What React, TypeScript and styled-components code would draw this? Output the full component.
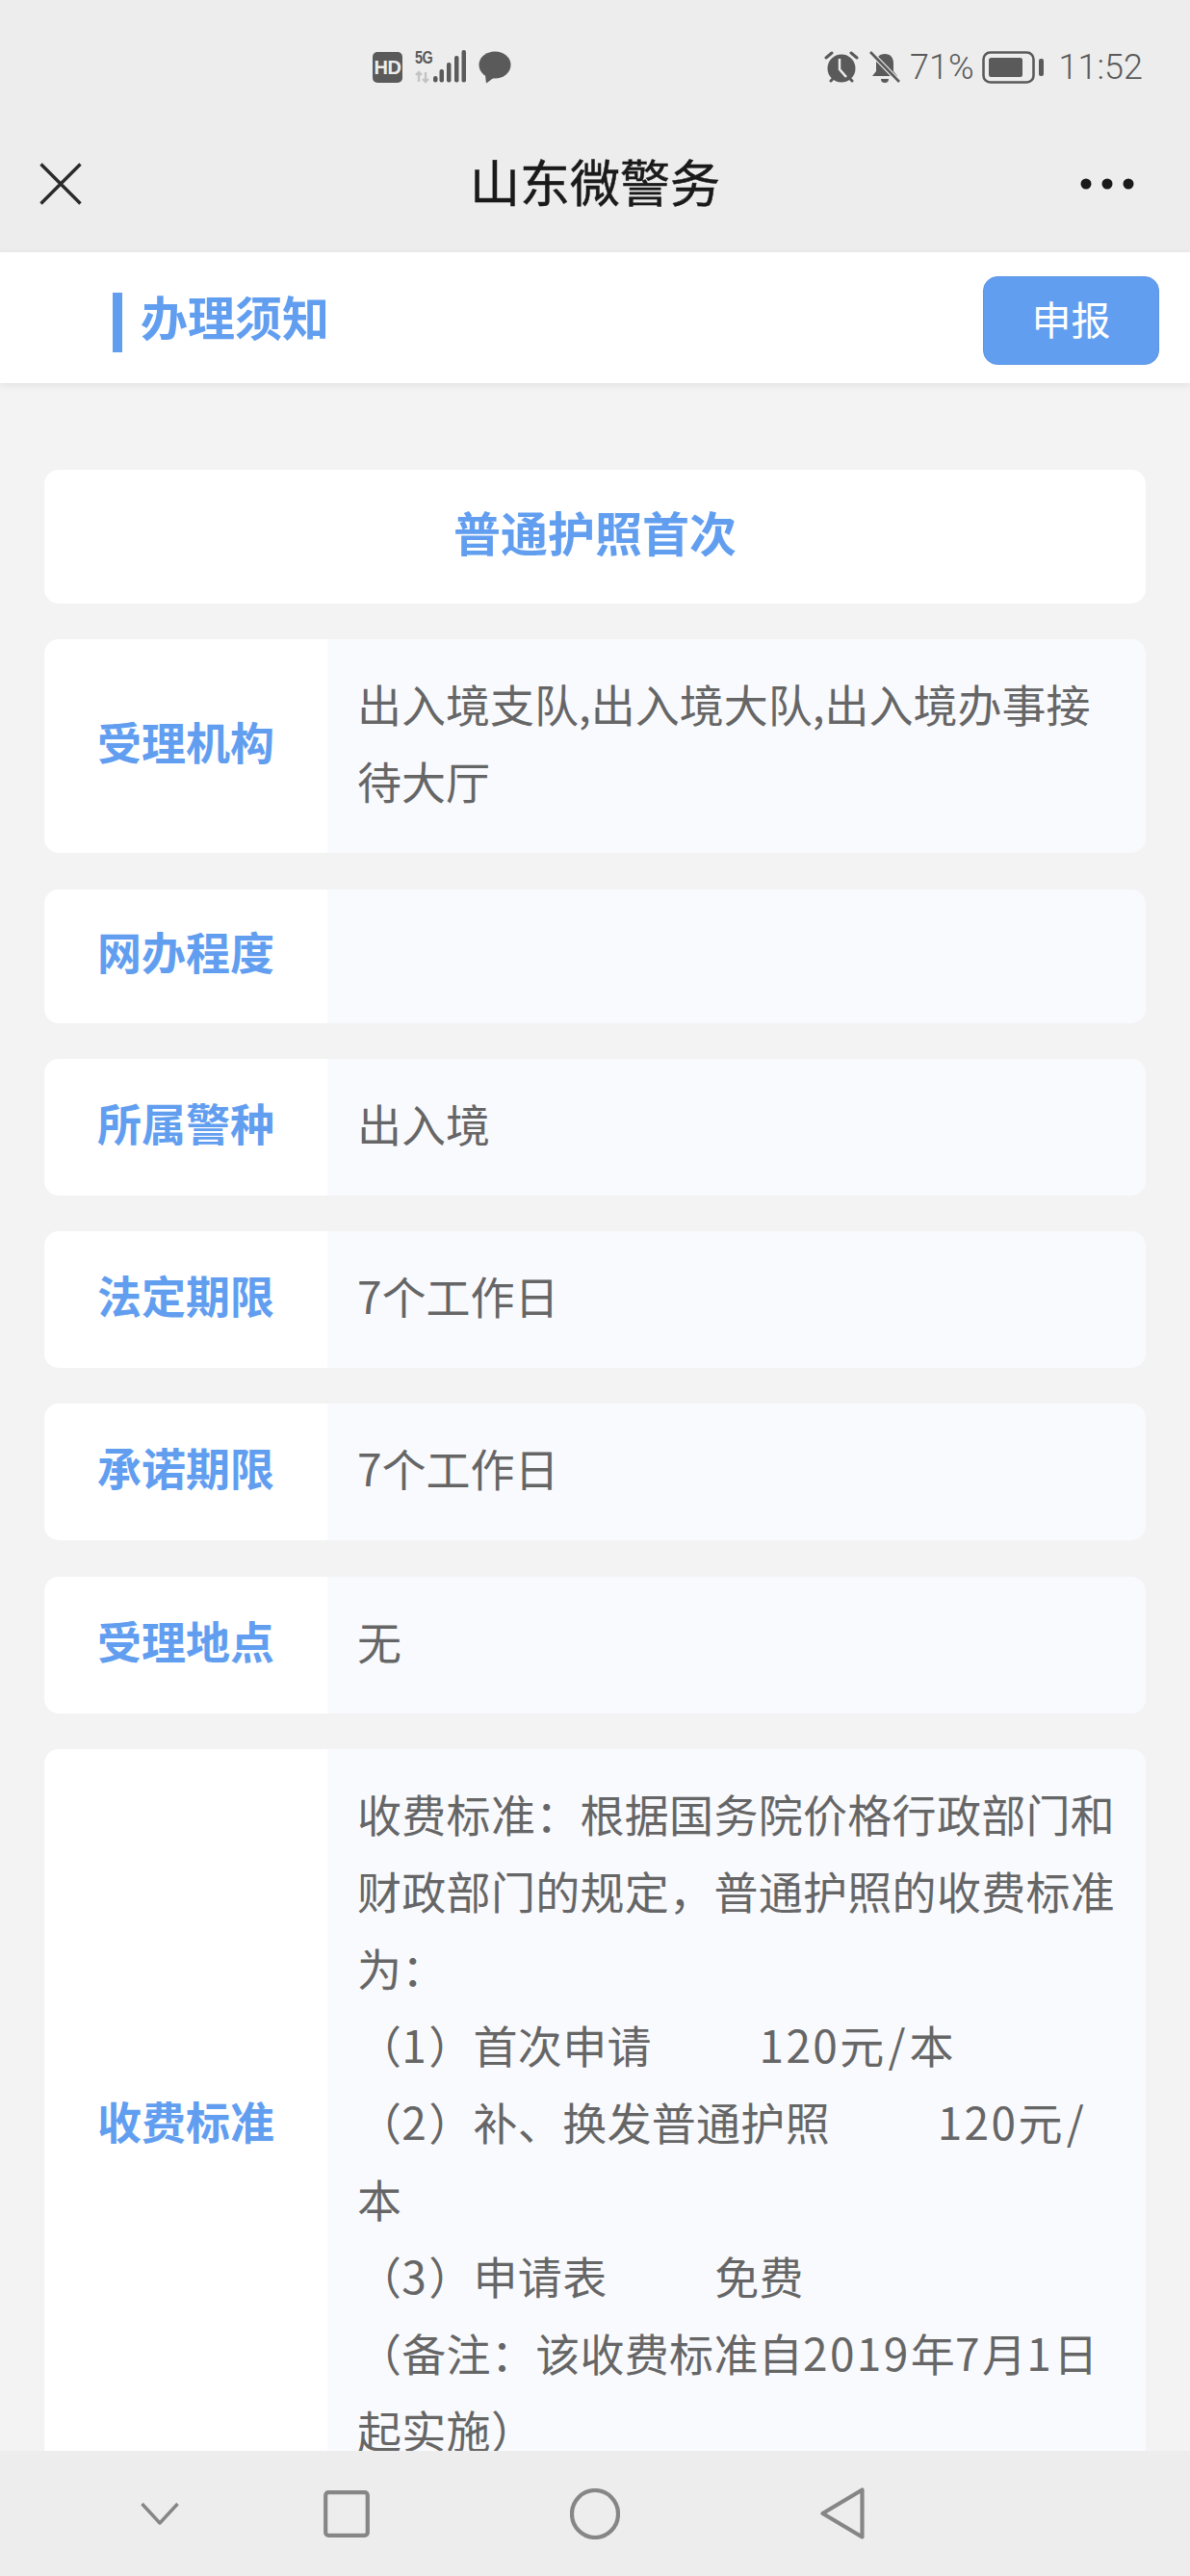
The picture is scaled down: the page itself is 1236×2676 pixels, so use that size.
import React from "react";
import styled, { createGlobalStyle } from "styled-components";

const Global = createGlobalStyle`
  html, body { margin: 0; padding: 0; background: #f3f3f3; }
  * { box-sizing: border-box; }
`;

const CJK = `"Noto Sans CJK SC", "Noto Sans", sans-serif`;
const BLUE = "#629ef0";

const Page = styled.div`
  width: 1236px;
  height: 2676px;
  display: flex;
  flex-direction: column;
  overflow: hidden;
  background: #f3f3f3;
  font-family: ${CJK};
`;
const StatusBar = styled.div`
  height: 120px;
  flex: none;
  background: #ededed;
  display: flex;
  align-items: flex-start;
  justify-content: space-between;
  padding: 53px 49px 0 387px;
  color: #5a5a5a;
`;
const StatusGroup = styled.div`
  display: flex;
  align-items: center;
  height: 34px;
`;
const HdBadge = styled.span`
  width: 31px;
  height: 32px;
  border-radius: 5px;
  background: #5a5a5a;
  color: #ededed;
  font: 700 20px "Liberation Sans", sans-serif;
  letter-spacing: -0.5px;
  display: flex;
  align-items: center;
  justify-content: center;
  margin-right: 13px;
`;
const SignalWrap = styled.span`
  position: relative;
  display: block;
  width: 53px;
  height: 34px;
  margin-right: 13px;
`;
const FiveG = styled.span`
  position: absolute;
  left: 0;
  top: -1px;
  font: 700 18px/16px "Liberation Sans", sans-serif;
  letter-spacing: -0.5px;
  transform: scaleX(0.8);
  transform-origin: left;
  color: #5a5a5a;
`;
const StatusText = styled.span<{ $left: number }>`
  font: 300 36px/34px Roboto, sans-serif;
  color: #5a5a5a;
  margin-left: ${(p) => p.$left}px;
`;
const IconSlot = styled.svg<{ $left?: number }>`
  display: block;
  flex: none;
  margin-left: ${(p) => p.$left ?? 0}px;
`;
const TitleBar = styled.div`
  height: 142px;
  flex: none;
  background: #ededed;
  display: grid;
  grid-template-columns: 1fr auto 1fr;
  align-items: center;
  padding: 0 58px 0 41px;
`;
const BarTitle = styled.div`
  font-size: 52px;
  line-height: 60px;
  font-weight: 400;
  color: #1a1a1a;
  padding-bottom: 6px;
  margin-left: 17px;
  -webkit-text-stroke: 0.5px #1a1a1a;
`;
const BarRight = styled.div`
  display: flex;
  justify-content: flex-end;
`;
const SubHeader = styled.div`
  height: 136px;
  flex: none;
  background: #fff;
  display: flex;
  align-items: center;
  padding: 6px 32px 0 117px;
  box-shadow: 0 2px 8px rgba(0, 0, 0, 0.08);
  position: relative;
  z-index: 1;
`;
const Accent = styled.span`
  width: 10px;
  height: 62px;
  background: ${BLUE};
  margin: 4px 19px 0 0;
  flex: none;
`;
const SubTitle = styled.div`
  font-size: 49px;
  line-height: 62px;
  font-weight: 700;
  color: ${BLUE};
  flex: 1;
  padding-bottom: 10px;
`;
const ApplyButton = styled.button`
  width: 183px;
  height: 92px;
  border: 1px solid #5a94e2;
  border-radius: 15px;
  background: ${BLUE};
  color: #fff;
  font-family: ${CJK};
  font-size: 41px;
  font-weight: 400;
  padding: 0 0 6px;
`;
const Content = styled.div`
  flex: 1;
  min-height: 0;
  overflow: hidden;
  padding: 90px 46px 0;
  display: flex;
  flex-direction: column;
  gap: 37.25px;
`;
const TitleCard = styled.div`
  height: 139px;
  flex: none;
  background: #fff;
  border-radius: 15px;
  display: flex;
  align-items: center;
  justify-content: center;
  font-size: 49px;
  font-weight: 700;
  color: ${BLUE};
  padding-bottom: 12px;
`;
const Row = styled.div`
  flex: none;
  display: grid;
  grid-template-columns: 294px 1fr;
  min-height: 139px;
  border-radius: 15px;
  overflow: hidden;
`;
const Label = styled.div`
  background: #fff;
  display: flex;
  align-items: center;
  justify-content: center;
  font-size: 46px;
  font-weight: 700;
  color: ${BLUE};
  padding-bottom: 12px;
`;
const Value = styled.div`
  background: #f9fafe;
  padding: 26px 28px 36px 31px;
  font-size: 46px;
  line-height: 80px;
  color: #666;
  white-space: pre-wrap;
`;
const FeeText = styled.span`
  letter-spacing: 0.3px;
`;
const Latin = styled.span`
  letter-spacing: 2.4px;
`;
const Slash = styled.span`
  padding-left: 4px;
  letter-spacing: 4px;
`;
const Gap = styled.span`
  letter-spacing: -0.15px;
`;
const BottomNav = styled.div`
  height: 130px;
  flex: none;
  background: #ededed;
  display: flex;
  align-items: center;
  padding-left: 146px;
  position: relative;
  z-index: 1;
`;

const SPACES = "           ";

const rows: { label: string; value: React.ReactNode }[] = [
  { label: "受理机构", value: "出入境支队,出入境大队,出入境办事接待大厅" },
  { label: "网办程度", value: "" },
  { label: "所属警种", value: "出入境" },
  { label: "法定期限", value: "7个工作日" },
  { label: "承诺期限", value: "7个工作日" },
  { label: "受理地点", value: "无" },
  {
    label: "收费标准",
    value: (
      <FeeText>
        {"收费标准：根据国务院价格行政部门和财政部门的规定，普通护照的收费标准为：\n（"}
        <Latin>1</Latin>）首次申请<Gap>{SPACES}</Gap>
        <Latin>120</Latin>元<Slash>/</Slash>本{"\n（"}
        <Latin>2</Latin>）补、换发普通护照<Gap>{SPACES}</Gap>
        <Latin>120</Latin>元<Slash>/</Slash>本{"\n（"}
        <Latin>3</Latin>）申请表<Gap>{SPACES}</Gap>
        {"免费\n（备注：该收费标准自"}
        <Latin>2019</Latin>年<Latin>7</Latin>月<Latin>1</Latin>日起实施）
      </FeeText>
    ),
  },
];

const Signal = () => (
  <svg width="53" height="34" viewBox="0 0 53 34" style={{ display: "block", overflow: "visible" }}>
    <g stroke="#c4c4c4" strokeWidth="2.4" fill="none">
      <path d="M4 32V22M1 25l3-3 3 3" />
      <path d="M11 22v10M8 29l3 3 3-3" />
    </g>
    <g fill="#5a5a5a">
      <rect x="19" y="26" width="4.5" height="6.5" rx="2.2" />
      <rect x="25.5" y="19" width="4.5" height="13.5" rx="2" />
      <rect x="33" y="12" width="4.5" height="20.5" rx="2" />
      <rect x="41" y="5" width="4.5" height="27.5" rx="2" />
      <rect x="48.5" y="-1" width="4.5" height="33.5" rx="2" />
    </g>
  </svg>
);

export default function App() {
  return (
    <Page>
      <Global />
      <StatusBar>
        <StatusGroup>
          <HdBadge>HD</HdBadge>
          <SignalWrap>
            <FiveG>5G</FiveG>
            <Signal />
          </SignalWrap>
          <IconSlot width="34" height="34" viewBox="0 0 34 34">
            <ellipse cx="17" cy="14.5" rx="16.5" ry="14" fill="#5a5a5a" />
            <path d="M7 25 L8 33.5 L17 27z" fill="#5a5a5a" />
          </IconSlot>
        </StatusGroup>
        <StatusGroup>
          <IconSlot width="36" height="34" viewBox="0 0 36 34">
            <circle cx="18" cy="18" r="14.5" fill="#5a5a5a" />
            <path d="M2 7l6-5M34 7l-6-5M7 31l3-3M29 31l-3-3" stroke="#5a5a5a" strokeWidth="3" strokeLinecap="round" />
            <path d="M16 8v11l7 8" stroke="#ededed" strokeWidth="2.5" fill="none" />
          </IconSlot>
          <IconSlot $left={11} width="32" height="34" viewBox="0 0 32 34">
            <path d="M16 3c-6 0-9 4-9 10v8l-4 5h26l-4-5v-8c0-6-3-10-9-10z" fill="#5a5a5a" />
            <path d="M12 29a4 4 0 0 0 8 0z" fill="#5a5a5a" />
            <path d="M1 1l30 31" stroke="#ededed" strokeWidth="5" />
            <path d="M1 1l30 31" stroke="#5a5a5a" strokeWidth="2.6" />
          </IconSlot>
          <StatusText $left={10}>71%</StatusText>
          <IconSlot $left={8} width="65" height="34" viewBox="0 0 65 34">
            <rect x="1.5" y="1.5" width="52" height="31" rx="7" fill="none" stroke="#5a5a5a" strokeWidth="2.6" />
            <rect x="7" y="7" width="35" height="20" rx="2.5" fill="#5a5a5a" />
            <rect x="59" y="8" width="5" height="18" rx="2" fill="#5a5a5a" />
          </IconSlot>
          <StatusText $left={15}>11:52</StatusText>
        </StatusGroup>
      </StatusBar>
      <TitleBar>
        <IconSlot width="44" height="44" viewBox="0 0 44 44">
          <path d="M1.5 1.5l41 41M42.5 1.5l-41 41" stroke="#2a2a2a" strokeWidth="3.4" />
        </IconSlot>
        <BarTitle>山东微警务</BarTitle>
        <BarRight>
          <IconSlot width="56" height="12" viewBox="0 0 56 12">
            <circle cx="6" cy="6" r="5.5" fill="#1a1a1a" />
            <circle cx="28" cy="6" r="5.5" fill="#1a1a1a" />
            <circle cx="50" cy="6" r="5.5" fill="#1a1a1a" />
          </IconSlot>
        </BarRight>
      </TitleBar>
      <SubHeader>
        <Accent />
        <SubTitle>办理须知</SubTitle>
        <ApplyButton>申报</ApplyButton>
      </SubHeader>
      <Content>
        <TitleCard>普通护照首次</TitleCard>
        {rows.map((r) => (
          <Row key={r.label}>
            <Label>{r.label}</Label>
            <Value>{r.value}</Value>
          </Row>
        ))}
      </Content>
      <BottomNav>
        <IconSlot width="40" height="24" viewBox="0 0 40 24">
          <path d="M1.5 2L20 22 38.5 2" fill="none" stroke="#868686" strokeWidth="3.4" strokeLinejoin="round" />
        </IconSlot>
        <IconSlot $left={150} width="48" height="49" viewBox="0 0 48 49">
          <rect x="2.2" y="2.2" width="43.6" height="44.6" rx="3" fill="none" stroke="#868686" strokeWidth="4.2" />
        </IconSlot>
        <IconSlot $left={208} width="52" height="53" viewBox="0 0 52 53">
          <ellipse cx="26" cy="26.5" rx="24" ry="24.5" fill="none" stroke="#868686" strokeWidth="4.2" />
        </IconSlot>
        <IconSlot $left={208} width="46" height="54" viewBox="0 0 46 54">
          <path d="M43.5 2.5V51.5L2.5 27z" fill="none" stroke="#868686" strokeWidth="4.2" strokeLinejoin="round" />
        </IconSlot>
      </BottomNav>
    </Page>
  );
}
